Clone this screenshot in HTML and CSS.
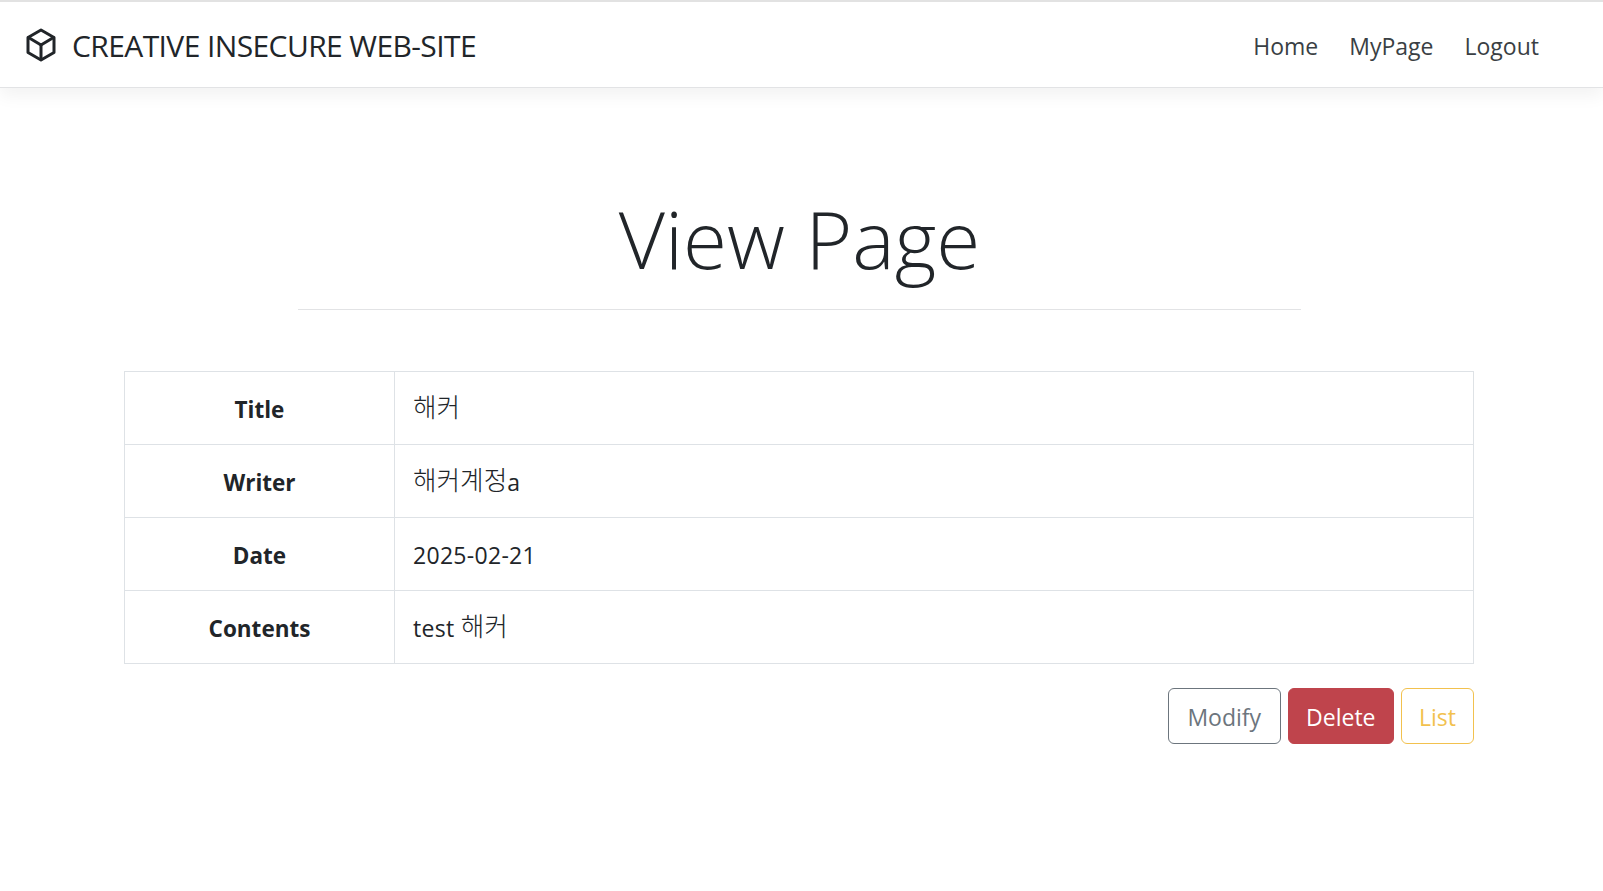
FILE: index.html
```html
<!DOCTYPE html>
<html lang="ko">
<head>
<meta charset="utf-8">
<title>View Page</title>
<link rel="stylesheet" href="styles.css">
</head>
<body>
<header class="navbar">
  <a class="brand" href="#">
    <svg class="brand-icon" viewBox="0 0 32 34" fill="none" stroke="currentColor" stroke-width="3" stroke-linejoin="round" stroke-linecap="round" aria-hidden="true"><path d="M16 2 L29 9.5 V24.5 L16 32 L3 24.500 V9.5 Z"/><path d="M3.5 9.5 L16 17 L28.500 9.5"/><path d="M16 17 V31"/></svg>
    <span class="brand-text">CREATIVE INSECURE WEB-SITE</span>
  </a>
  <nav class="nav">
    <a href="#">Home</a>
    <a href="#">MyPage</a>
    <a href="#">Logout</a>
  </nav>
</header>
<main class="page">
  <div class="heading">
    <h1>View Page</h1>
  </div>
  <table class="detail">
    <tbody>
      <tr><th>Title</th><td><span class="ko">해커</span></td></tr>
      <tr><th>Writer</th><td><span class="ko">해커계정</span>a</td></tr>
      <tr><th>Date</th><td>2025-02-21</td></tr>
      <tr><th>Contents</th><td>test <span class="ko">해커</span></td></tr>
    </tbody>
  </table>
  <div class="actions">
    <a class="btn btn-modify" href="#">Modify</a>
    <a class="btn btn-delete" href="#">Delete</a>
    <a class="btn btn-list" href="#">List</a>
  </div>
</main>
</body>
</html>
```
FILE: styles.css
```css
* { box-sizing: border-box; }
html, body { margin: 0; padding: 0; }
body {
  background: #fff;
  color: #212529;
  font-family: "Open Sans", "Noto Sans CJK KR", sans-serif;
  font-size: 23px;
}
a { text-decoration: none; color: inherit; }
.navbar {
  height: 88px;
  border-top: 2px solid #e2e2e2;
  border-bottom: 1px solid #e2e3e5;
  box-shadow: 0 8px 16px rgba(0,0,0,.05);
  display: flex;
  align-items: center;
  justify-content: space-between;
  padding: 0 64px 0 25px;
  background: #fff;
}
.brand { display: flex; align-items: center; gap: 15px; font-size: 30px; letter-spacing: -.6px; color: #212529; }
.brand-text { padding-top: 2px; }
.brand-icon { width: 32px; height: 34px; display: block; }
.nav { display: flex; gap: 31px; color: #3a3f44; padding-top: 2px; }
.page { padding: 0 129px 0 124px; }
.heading { margin: 0 173px 0 174px; padding: 102px 0 23px; border-bottom: 1px solid #e2e3e5; text-align: center; }
h1 { margin: 0; font-weight: 300; font-size: 80px; line-height: 96px; color: #212529; }
.detail { width: 100%; margin-top: 61px; border-collapse: collapse; table-layout: fixed; }
.detail th, .detail td { border: 1px solid #dee2e6; height: 73px; padding: 3px 18px 0; line-height: 32px; }
.detail th { width: 270px; text-align: center; font-weight: 700; font-size: 22.5px; }
.detail td { text-align: left; letter-spacing: .3px; padding-top: 2px; }
.ko { font-size: 25.6px; font-weight: 300; letter-spacing: 0; line-height: 1; vertical-align: 1px; }
.actions { display: flex; justify-content: flex-end; gap: 7px; margin-top: 24px; }
.btn { display: flex; align-items: center; justify-content: center; height: 56px; border: 1px solid; border-radius: 6px; padding: 2px 17.5px 0; }
.btn-modify { border-color: #6c757d; color: #6c757d; padding-left: 18.500px; padding-right: 18.500px; }
.btn-delete { background: #bf444c; border-color: #bf444c; color: #fff; }
.btn-list { border-color: #f2c14e; color: #f2c14e; padding-left: 17px; padding-right: 17px; }
```
